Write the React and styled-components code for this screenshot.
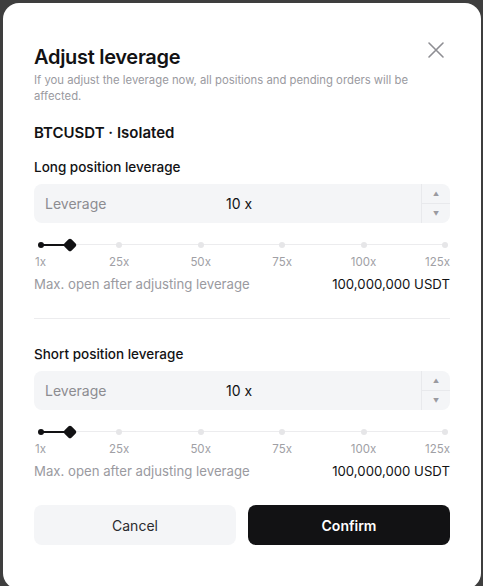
import React, { useState } from 'react';
import styled, { createGlobalStyle } from 'styled-components';

const GlobalStyle = createGlobalStyle`
  html, body {
    margin: 0;
    padding: 0;
    background: #3e3e3e;
    height: 586px;
    overflow: hidden;
  }
  * { box-sizing: border-box; }
`;

const Modal = styled.div`
  margin: 3px 2px 0 3px;
  height: 586px;
  background: #ffffff;
  border-radius: 16px;
  padding: 42px 31px 0 31px;
  font-family: Inter, "Noto Sans", sans-serif;
  color: #121214;
`;

const Header = styled.div`
  position: relative;
`;

const Title = styled.h2`
  margin: 0;
  font-size: 20px;
  line-height: 24px;
  font-weight: 600;
  letter-spacing: -0.3px;
`;

const Subtitle = styled.p`
  margin: 3px 0 0;
  font-size: 11.3px;
  line-height: 16px;
  color: #9a9a9f;
  padding-right: 34px;
`;

const CloseButton = styled.button`
  position: absolute;
  top: -6px;
  right: 3px;
  width: 22px;
  height: 22px;
  padding: 0;
  border: none;
  background: none;
  cursor: pointer;
  display: flex;
  align-items: center;
  justify-content: center;
`;

const Pair = styled.div`
  margin-top: 19px;
  font-size: 15px;
  line-height: 20px;
  font-weight: 600;
`;

const Section = styled.div`
  padding-top: ${p => p.$top}px;
`;

const SectionTitle = styled.div`
  font-size: 13.5px;
  line-height: 18px;
  font-weight: 500;
  margin-bottom: 8px;
`;

const InputBox = styled.div`
  display: flex;
  align-items: stretch;
  height: 39px;
  background: #f4f5f7;
  border-radius: 8px;
  overflow: hidden;
`;

const InputLabel = styled.span`
  width: 192px;
  padding-left: 11px;
  display: flex;
  align-items: center;
  font-size: 14px;
  color: #8c8c91;
`;

const InputValue = styled.span`
  flex: 1;
  display: flex;
  align-items: center;
  font-size: 14px;
  color: #121214;
`;

const Stepper = styled.div`
  width: 29px;
  display: flex;
  flex-direction: column;
  border-left: 1px solid #e8e9ec;
`;

const StepBtn = styled.div`
  flex: 1;
  display: flex;
  align-items: center;
  justify-content: center;
  font-size: 6px;
  color: #9a9aa0;
  & + & {
    border-top: 1px solid #e8e9ec;
  }
`;

const SliderWrap = styled.div`
  margin-top: 15px;
  padding: 0 5px 0 7px;
`;

const Track = styled.div`
  position: relative;
  height: 14px;
`;

const TrackLine = styled.div`
  position: absolute;
  left: 0;
  right: 0;
  top: 6px;
  height: 1px;
  background: #ececee;
`;

const TrackFill = styled.div`
  position: absolute;
  left: 0;
  top: 6px;
  height: 1.5px;
  background: #121214;
`;

const Tick = styled.div`
  position: absolute;
  top: 4px;
  width: 6px;
  height: 6px;
  margin-left: -3px;
  border-radius: 50%;
  background: ${p => (p.$active ? '#121214' : '#e6e6e8')};
`;

const Thumb = styled.div`
  position: absolute;
  top: 2px;
  width: 10px;
  height: 10px;
  margin-left: -5px;
  background: #121214;
  border-radius: 2px;
  transform: rotate(45deg);
`;

const Marks = styled.div`
  position: relative;
  height: 14px;
  margin-top: 3px;
  font-size: 11.5px;
  line-height: 14px;
  color: #a0a0a5;
`;

const MarkLabel = styled.span`
  position: absolute;
  top: 0;
  white-space: nowrap;
  transform: translateX(${p => p.$shift});
`;

const InfoRow = styled.div`
  display: flex;
  justify-content: space-between;
  margin-top: 6px;
  font-size: 13.2px;
  line-height: 18px;
`;

const InfoLabel = styled.span`
  color: #9a9a9f;
`;

const InfoValue = styled.span`
  color: #121214;
`;

const Divider = styled.div`
  height: 1px;
  background: #ececee;
  margin-top: 25px;
`;

const Buttons = styled.div`
  display: grid;
  grid-template-columns: 1fr 1fr;
  gap: 12px;
  margin-top: 25px;
`;

const Button = styled.button`
  height: 40px;
  border: none;
  border-radius: 8px;
  font-family: Inter, "Noto Sans", sans-serif;
  font-size: 14px;
  cursor: pointer;
  background: ${p => (p.$primary ? '#121214' : '#f4f5f7')};
  color: ${p => (p.$primary ? '#ffffff' : '#2a2a2e')};
  font-weight: ${p => (p.$primary ? 600 : 400)};
`;

const MARKS = [1, 25, 50, 75, 100, 125];

const LeverageSlider = ({ value }) => {
  const pct = v => ((v - 1) / 124) * 100;
  return (
    <SliderWrap>
      <Track>
        <TrackLine />
        <TrackFill style={{ width: `${pct(value)}%` }} />
        {MARKS.map(m => (
          <Tick key={m} $active={m <= value} style={{ left: `${pct(m)}%` }} />
        ))}
        <Thumb style={{ left: `${pct(value)}%` }} />
      </Track>
      <Marks>
        {MARKS.map((m, i) => (
          <MarkLabel
            key={m}
            $shift={i === 0 ? '-6px' : i === MARKS.length - 1 ? 'calc(-100% + 5px)' : '-50%'}
            style={{ left: `${pct(m)}%` }}
          >
            {m}x
          </MarkLabel>
        ))}
      </Marks>
    </SliderWrap>
  );
};

const LeverageBlock = ({ title, value, top }) => (
  <Section $top={top}>
    <SectionTitle>{title}</SectionTitle>
    <InputBox>
      <InputLabel>Leverage</InputLabel>
      <InputValue>{value} x</InputValue>
      <Stepper>
        <StepBtn>▲</StepBtn>
        <StepBtn>▼</StepBtn>
      </Stepper>
    </InputBox>
    <LeverageSlider value={value} />
    <InfoRow>
      <InfoLabel>Max. open after adjusting leverage</InfoLabel>
      <InfoValue>100,000,000 USDT</InfoValue>
    </InfoRow>
  </Section>
);

export default function App() {
  const [longLev] = useState(10);
  const [shortLev] = useState(10);

  return (
    <>
      <GlobalStyle />
      <Modal>
        <Header>
          <Title>Adjust leverage</Title>
          <Subtitle>
            If you adjust the leverage now, all positions and pending orders will be affected.
          </Subtitle>
          <CloseButton aria-label="Close">
            <svg width="18" height="18" viewBox="0 0 18 18" fill="none">
              <path d="M2 2L16 16M16 2L2 16" stroke="#8e8e93" strokeWidth="1.6" strokeLinecap="round" />
            </svg>
          </CloseButton>
        </Header>
        <Pair>BTCUSDT · Isolated</Pair>
        <LeverageBlock title="Long position leverage" value={longLev} top={15} />
        <Divider />
        <LeverageBlock title="Short position leverage" value={shortLev} top={26} />
        <Buttons>
          <Button>Cancel</Button>
          <Button $primary>Confirm</Button>
        </Buttons>
      </Modal>
    </>
  );
}
